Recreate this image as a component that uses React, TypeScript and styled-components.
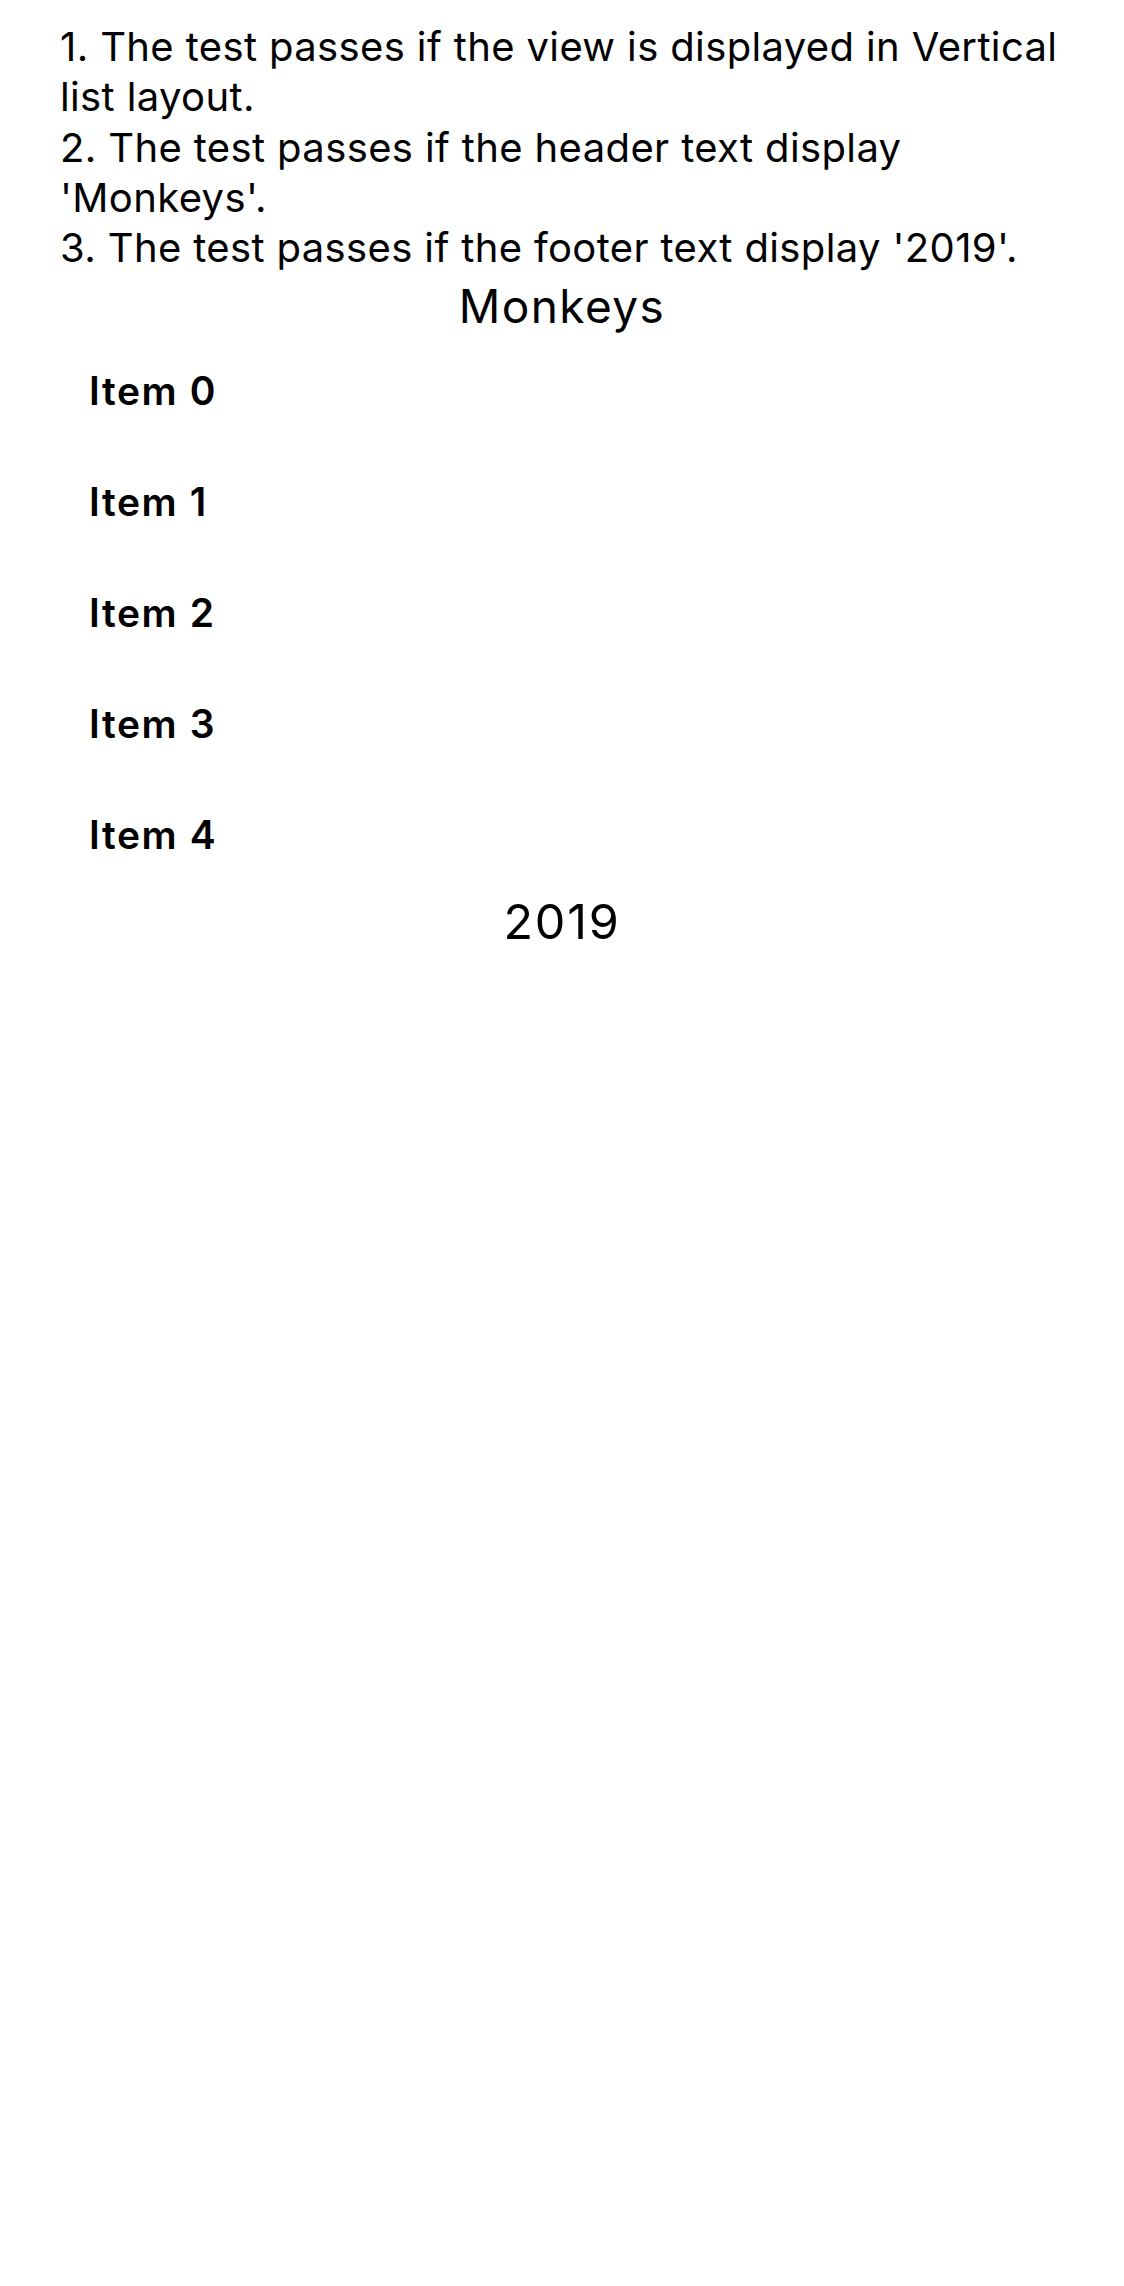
import React from "react";
import styled, { createGlobalStyle } from "styled-components";

const GlobalStyle = createGlobalStyle`
  html, body {
    margin: 0;
    padding: 0;
    background: #ffffff;
  }
  body {
    font-family: Inter, "Noto Sans", "Liberation Sans", sans-serif;
    color: #000000;
    -webkit-font-smoothing: antialiased;
  }
`;

const Page = styled.div`
  width: 1124px;
  min-height: 2286px;
  background: #ffffff;
  display: flex;
  flex-direction: column;
  padding-top: 22px;
  box-sizing: border-box;
`;

const Instructions = styled.div`
  padding: 0 40px 0 60px;
  font-size: 40px;
  line-height: 50.3px;
  font-weight: 400;
  letter-spacing: 0.37px;
`;

const InstructionLine = styled.div`
  white-space: nowrap;
`;

const Header = styled.div`
  margin-top: 4px;
  text-align: center;
  font-size: 46px;
  line-height: 58px;
  font-weight: 400;
  letter-spacing: 1.45px;
`;

const List = styled.div`
  display: flex;
  flex-direction: column;
`;

const Row = styled.div`
  height: 111px;
  display: flex;
  align-items: center;
  padding-left: 89px;
  font-size: 39px;
  font-weight: 600;
  letter-spacing: 1.6px;
`;

const Footer = styled.div`
  margin-top: 2px;
  text-align: center;
  font-size: 48.5px;
  line-height: 60px;
  font-weight: 400;
  letter-spacing: 1.8px;
`;

const lines = [
  "1. The test passes if the view is displayed in Vertical",
  "list layout.",
  "2. The test passes if the header text display",
  "'Monkeys'.",
  "3. The test passes if the footer text display '2019'.",
];

export default function App() {
  return (
    <>
      <GlobalStyle />
      <Page>
        <Instructions>
          {lines.map((l, i) => (
            <InstructionLine key={i}>{l}</InstructionLine>
          ))}
        </Instructions>
        <Header>Monkeys</Header>
        <List>
          {[0, 1, 2, 3, 4].map((n) => (
            <Row key={n}>Item {n}</Row>
          ))}
        </List>
        <Footer>2019</Footer>
      </Page>
    </>
  );
}
